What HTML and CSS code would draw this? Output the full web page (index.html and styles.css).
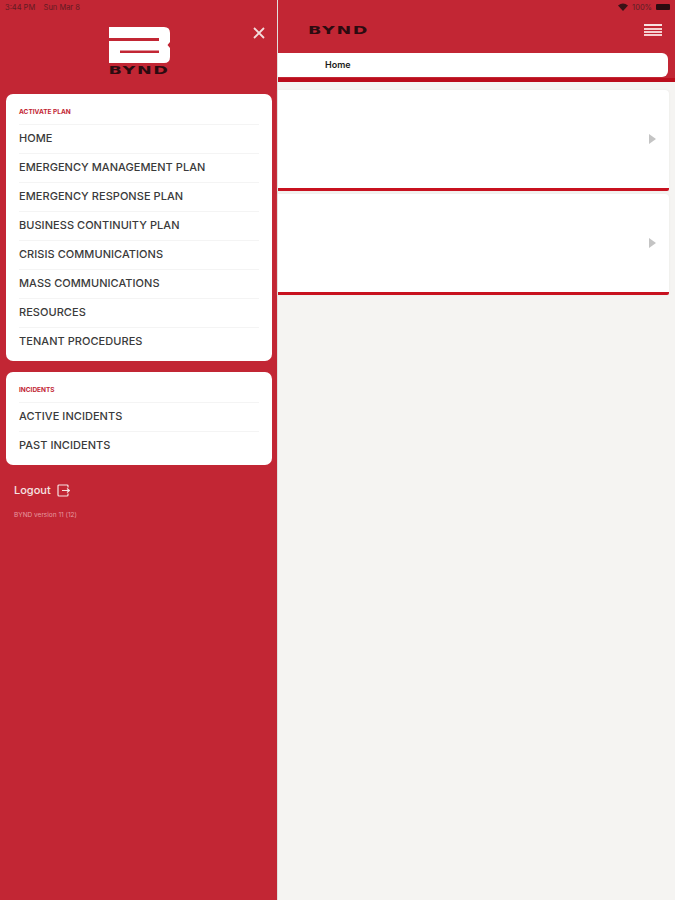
FILE: index.html
```html
<!DOCTYPE html>
<html lang="en">
<head>
  <meta charset="UTF-8" />
  <meta name="viewport" content="width=device-width, initial-scale=1.0"/>
  <title>BYND</title>
  <link rel="stylesheet" href="styles.css">
</head>
<body>
  <aside class="drawer">
    <div class="status-left">3:44 PM&nbsp;&nbsp;&nbsp; Sun Mar 8</div>
    <div class="drawer-head">
      <div class="logo">
        <svg width="61" height="36" viewBox="0 0 61 36">
          <path fill="#fff" fill-rule="evenodd" d="M0 0H55Q61 0 61 6V15L58.500 18L61 21V30Q61 36 55 36H0ZM0 11V14H50V11ZM11 23.500V26H50V23.500Z"/>
        </svg>
        <span class="logo-word">BYND</span>
      </div>
      <svg class="close" width="12" height="12" viewBox="0 0 12 12">
        <path d="M1 1L11 11M11 1L1 11" stroke="#f3dcdc" stroke-width="1.800" fill="none"/>
      </svg>
    </div>

    <section class="menu-card">
      <h4>ACTIVATE PLAN</h4>
      <a>HOME</a>
      <a>EMERGENCY MANAGEMENT PLAN</a>
      <a>EMERGENCY RESPONSE PLAN</a>
      <a>BUSINESS CONTINUITY PLAN</a>
      <a>CRISIS COMMUNICATIONS</a>
      <a>MASS COMMUNICATIONS</a>
      <a>RESOURCES</a>
      <a>TENANT PROCEDURES</a>
    </section>

    <section class="menu-card">
      <h4>INCIDENTS</h4>
      <a>ACTIVE INCIDENTS</a>
      <a>PAST INCIDENTS</a>
    </section>

    <div class="logout">
      Logout
      <svg width="13" height="13" viewBox="0 0 13 13" fill="none" stroke="#f6e3e3" stroke-width="1.200">
        <path d="M11 3.500V2Q11 1 10 1H2Q1 1 1 2V11Q1 12 2 12H10Q11 12 11 11V9.500"/>
        <path d="M5 6.500H12.500M10 4.500L12.500 6.500L10 8.500"/>
      </svg>
    </div>
    <div class="version">BYND version 11 (12)</div>
  </aside>

  <main class="content">
    <div class="topbar">
      <div class="status-right">
        <svg width="10" height="8" viewBox="0 0 10 8"><path fill="#3a1216" d="M0 2.500Q5 -1.500 10 2.500L5 8Z"/></svg>
        <span>100%</span>
        <span class="battery"></span>
      </div>
      <div class="nav-row">
        <span class="nav-word">BYND</span>
        <div class="burger"><i></i><i></i><i></i><i></i></div>
      </div>
    </div>
    <div class="crumb"><span>Home</span></div>
    <div class="cards">
      <div class="card"><span class="arrow"></span></div>
      <div class="card"><span class="arrow"></span></div>
    </div>
  </main>
</body>
</html>
```

FILE: styles.css
```css
* {
  box-sizing: border-box;
}
body {
  margin: 0;
  height: 900px;
  display: flex;
  overflow: hidden;
  background: #f5f4f2;
  font-family: "Inter", "Liberation Sans", sans-serif;
}
.drawer {
  width: 277px;
  height: 900px;
  flex-shrink: 0;
  background: #c22634;
  padding: 0 5px 0 6px;
}
.status-left {
  height: 14px;
  margin-left: -1px;
  padding-top: 3px;
  font-size: 7.500px;
  color: #4a1a20;
  opacity: 0.8;
}
.drawer-head {
  height: 80px;
  display: flex;
  justify-content: center;
  position: relative;
  padding-top: 13px;
}
.logo {
  display: flex;
  flex-direction: column;
  align-items: center;
  margin-left: 1px;
}
.logo-word {
  margin-top: 3px;
  font-family: "DejaVu Sans", sans-serif;
  font-size: 11px;
  line-height: 10px;
  font-weight: bold;
  letter-spacing: 1px;
  color: #2c0b10;
  transform: scaleX(1.6);
}
.close {
  position: absolute;
  top: 13px;
  right: 7px;
}
.menu-card {
  background: #fff;
  border-radius: 7px;
  padding: 14px 13px 5px;
  margin-bottom: 11px;
}
.menu-card h4 {
  margin: 0;
  height: 16px;
  font-size: 6.500px;
  line-height: 8px;
  font-weight: 700;
  color: #c22634;
}
.menu-card a {
  display: block;
  height: 29px;
  border-top: 1px solid #f4f4f4;
  font-size: 11px;
  line-height: 27px;
  font-weight: 500;
  letter-spacing: 0.050px;
  color: #3a3a3a;
}
.logout {
  display: flex;
  align-items: center;
  gap: 6px;
  margin: 18px 0 0 8px;
  font-size: 11px;
  font-weight: 500;
  color: #f6e3e3;
}
.version {
  margin: 14px 0 0 8px;
  font-size: 6.500px;
  color: #e79aa0;
}
.content {
  flex: 1;
  border-left: 1px solid #e2dfdd;
}
.topbar {
  height: 53px;
  background: #c22634;
}
.status-right {
  display: flex;
  justify-content: flex-end;
  align-items: center;
  gap: 4px;
  height: 14px;
  padding-right: 5px;
  font-size: 7.500px;
  color: #5a2026;
}
.battery {
  width: 14px;
  height: 6px;
  border-radius: 1px;
  background: #2c0b10;
}
.nav-row {
  display: flex;
  justify-content: space-between;
  align-items: center;
  height: 32px;
  padding: 0 13px 0 30px;
}
.nav-word {
  font-family: "DejaVu Sans", sans-serif;
  font-size: 11px;
  font-weight: bold;
  letter-spacing: 1px;
  color: #2c0b10;
  transform: scaleX(1.6);
  transform-origin: left center;
}
.burger {
  width: 18px;
  display: flex;
  flex-direction: column;
  gap: 1px;
}
.burger i {
  display: block;
  height: 2px;
  background: #f6cfd0;
}
.burger i:first-child {
  margin-bottom: 1px;
  background: #f7e2e2;
}
.crumb {
  height: 29px;
  background: #c22634;
  border-bottom: 4px solid #bb0d1c;
  padding-right: 7px;
}
.crumb span {
  display: block;
  height: 24px;
  padding-left: 47px;
  background: #fff;
  border-radius: 0 6px 6px 0;
  font-size: 9px;
  line-height: 23px;
  font-weight: 600;
  color: #1c1c1c;
}
.cards {
  padding: 8px 6px 0 0;
}
.card {
  height: 101px;
  margin-bottom: 3px;
  display: flex;
  align-items: center;
  justify-content: flex-end;
  padding-right: 13px;
  background: #fff;
  border-bottom: 3px solid #c8111f;
  border-radius: 0 4px 2px 0;
  box-shadow: 0 0 2px #e8e6e4;
}
.arrow {
  width: 0;
  height: 0;
  border-left: 7px solid #c4c4c4;
  border-top: 5px solid transparent;
  border-bottom: 5px solid transparent;
}
```
